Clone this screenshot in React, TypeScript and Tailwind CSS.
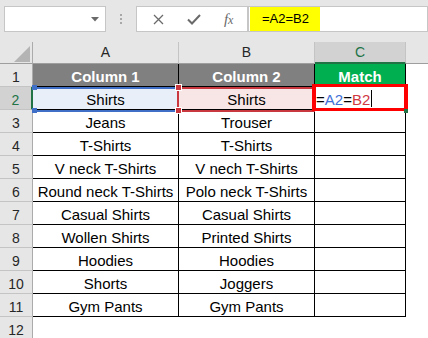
import React from "react";

const rows: [string, string][] = [
  ["Jeans", "Trouser"],
  ["T-Shirts", "T-Shirts"],
  ["V neck T-Shirts", "V nech T-Shirts"],
  ["Round neck T-Shirts", "Polo neck T-Shirts"],
  ["Casual Shirts", "Casual Shirts"],
  ["Wollen Shirts", "Printed Shirts"],
  ["Hoodies", "Hoodies"],
  ["Shorts", "Joggers"],
  ["Gym Pants", "Gym Pants"],
];

const rowHead =
  "h-[23px] border-b border-r border-b-[#c4c4c4] border-r-[#ababab] bg-[#e6e6e6] flex items-end justify-center pb-[1px] leading-[16px] text-[14px] text-[#262626]";
const cell =
  "h-[23px] border-b border-r border-black flex items-end justify-center pb-[1px] leading-[17px] text-[15px] text-black whitespace-nowrap";
const colHead =
  "h-[22px] border-b border-r border-b-[#9e9e9e] border-r-[#c4c4c4] bg-[#e6e6e6] flex items-center justify-center text-[14px] text-[#262626]";

export default function App() {
  return (
    <div
      className="w-[428px] h-[338px] overflow-hidden bg-white"
      style={{ fontFamily: '"Liberation Sans", Arial, sans-serif' }}
    >
      {/* Formula bar */}
      <div className="h-[42px] bg-[#e6e6e6] flex items-start pt-[6px]">
        <div className="ml-[4px] w-[102px] h-[26px] bg-white border border-[#c6c6c6] flex items-center justify-end pr-[6px]">
          <svg width="8" height="5" viewBox="0 0 8 5">
            <path d="M0 0 L8 0 L4 4.5 Z" fill="#6a6a6a" />
          </svg>
        </div>
        <div className="w-[30px] h-[26px] flex flex-col items-center justify-center gap-[2px]">
          <div className="w-[2px] h-[2px] bg-[#a8a8a8]" />
          <div className="w-[2px] h-[2px] bg-[#a8a8a8]" />
          <div className="w-[2px] h-[2px] bg-[#a8a8a8]" />
        </div>
        <div className="w-[112px] h-[26px] bg-white border border-[#c6c6c6] flex items-center">
          <div className="w-[37px] flex justify-center pl-[6px]">
            <svg width="11" height="11" viewBox="0 0 11 11">
              <path d="M1 1 L10 10 M10 1 L1 10" stroke="#6a6a6a" strokeWidth="1.3" />
            </svg>
          </div>
          <div className="w-[37px] flex justify-center pl-[4px]">
            <svg width="14" height="11" viewBox="0 0 14 11">
              <path d="M1 5.5 L5 9.5 L13 1" stroke="#6a6a6a" strokeWidth="2" fill="none" />
            </svg>
          </div>
          <div
            className="w-[37px] flex justify-center text-[15px] italic text-[#6a6a6a] leading-none"
            style={{ fontFamily: '"Liberation Serif", "Times New Roman", serif' }}
          >
            <span>
              f<span className="text-[12px]">x</span>
            </span>
          </div>
        </div>
        <div className="flex-1 h-[26px] bg-white border border-[#c6c6c6] pl-[1px] pt-0">
          <div className="w-[70px] h-[24px] bg-[#ffff00] flex items-center pl-[12px] text-[13px] text-black">
            =A2=B2
          </div>
        </div>
      </div>

      {/* Sheet grid */}
      <div className="grid grid-cols-[33px_146px_136px_91px_1fr]">
        {/* Header row */}
        <div className="h-[22px] border-b border-r border-b-[#9e9e9e] border-r-[#ababab] bg-[#e6e6e6] relative">
          <svg className="absolute left-[14px] top-[4px]" width="16" height="16" viewBox="0 0 16 16">
            <path d="M16 0 L16 16 L0 16 Z" fill="#b4b4b4" />
          </svg>
        </div>
        <div className={colHead}>A</div>
        <div className={colHead}>B</div>
        <div className="h-[22px] border-b-2 border-r border-b-[#217346] border-r-[#c4c4c4] bg-[#d2d2d2] flex items-center justify-center text-[14px] text-[#217346]">
          C
        </div>
        <div className="h-[22px] border-b border-b-[#9e9e9e] bg-[#e6e6e6]" />

        {/* Row 1 */}
        <div className={rowHead}>1</div>
        <div className={`${cell} bg-[#808080] text-white font-bold`}>Column 1</div>
        <div className={`${cell} bg-[#808080] text-white font-bold`}>Column 2</div>
        <div className={`${cell} bg-[#00b050] text-white font-bold`}>Match</div>
        <div className="h-[23px]" />

        {/* Row 2 */}
        <div className="h-[23px] border-b border-r-2 border-b-[#c4c4c4] border-r-[#217346] bg-[#d2d2d2] flex items-end justify-center pb-[1px] leading-[16px] text-[14px] text-[#217346]">
          2
        </div>
        <div className={`${cell} bg-[#e8eff9] relative`}>
          <div className="absolute left-0 right-0 top-0 h-[25px] border-t-2 border-b-2 border-[#3f6fc6] z-10 pointer-events-none" />
          <div className="absolute left-[-1px] top-[-2px] w-[5px] h-[5px] bg-[#3f6fc6] z-20" />
          <div className="absolute left-[-1px] top-[21px] w-[5px] h-[5px] bg-[#3f6fc6] z-20" />
          <span className="relative">Shirts</span>
        </div>
        <div className={`${cell} bg-[#f8e6e6] relative`}>
          <div className="absolute left-[-2px] right-[-1px] top-0 h-[25px] border-t-2 border-b-2 border-l-2 border-[#c8383e] z-10 pointer-events-none" />
          <div className="absolute left-[-4px] top-[-3px] w-[7px] h-[7px] bg-[#c8383e] border border-white z-20" />
          <div className="absolute left-[-4px] top-[20px] w-[7px] h-[7px] bg-[#c8383e] border border-white z-20" />
          <span className="relative">Shirts</span>
        </div>
        <div className="h-[23px] border-b border-r border-black relative flex items-end justify-start pl-[1px] pb-[1px] leading-[17px] whitespace-nowrap text-black">
          <div className="absolute left-[-3px] top-[-3px] w-[96px] h-[27px] border-[4px] border-t-[3px] border-b-[3px] border-[#ff0000] z-10" />
          <div className="absolute left-[89px] top-[22px] w-[4px] h-[4px] bg-[#217346] z-20" />
          <span className="relative text-[15px]">
            =<span className="text-[#3f6fd6]">A2</span>=<span className="text-[#d0383f]">B2</span>
          </span>
          <span className="relative inline-block w-[1px] h-[17px] bg-black ml-[1px] mb-[1px]" />
        </div>
        <div className="h-[23px]" />

        {rows.map(([a, b], i) => (
          <React.Fragment key={i}>
            <div className={rowHead}>{i + 3}</div>
            <div className={cell}>{a}</div>
            <div className={cell}>{b}</div>
            <div className={cell} />
            <div className="h-[23px]" />
          </React.Fragment>
        ))}

        {/* Row 12 */}
        <div className={rowHead}>12</div>
        <div className="h-[23px]" />
        <div className="h-[23px]" />
        <div className="h-[23px]" />
        <div className="h-[23px]" />
      </div>
    </div>
  );
}
